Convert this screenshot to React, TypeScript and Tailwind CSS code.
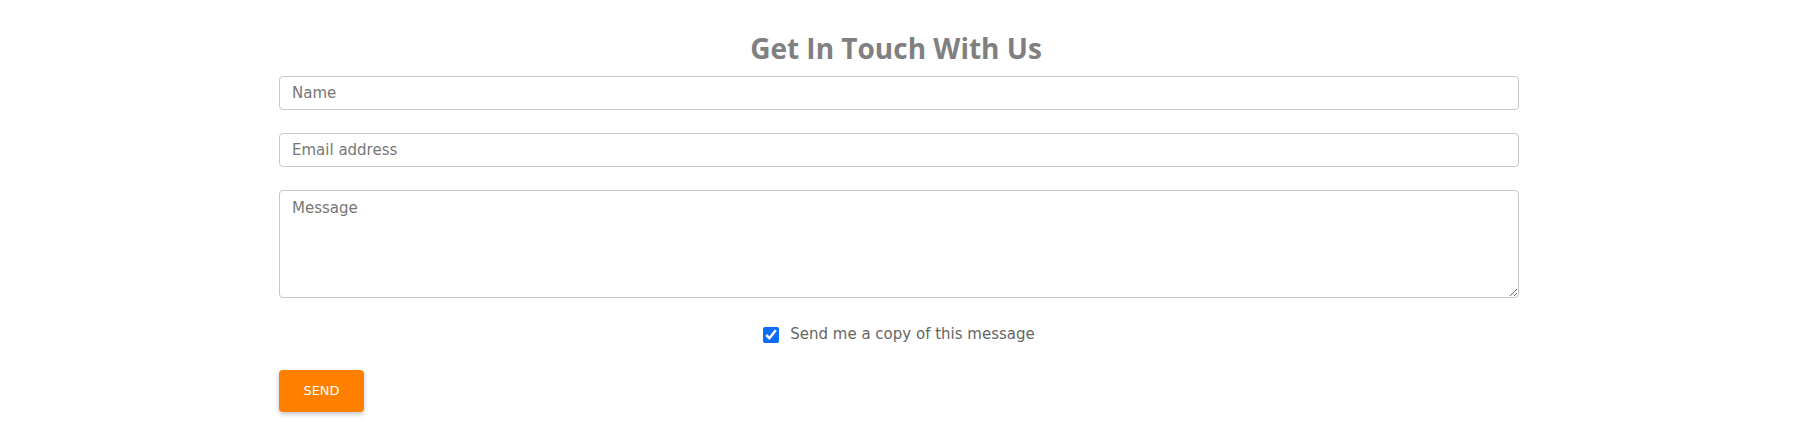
import { useState } from 'react'

export default function App() {
  const [copy, setCopy] = useState(true)

  return (
    <div className="min-h-[436px] bg-white flex justify-center pr-[11px] font-['DejaVu_Sans',sans-serif]">
      <form className="w-[1240px] flex flex-col" onSubmit={(e) => e.preventDefault()}>
        <h2 className="text-center text-[28px] leading-none font-bold text-[#808080] font-['Open_Sans',sans-serif] pt-[34px] pb-[14px] pr-[6px]">
          Get In Touch With Us
        </h2>

        <input
          type="text"
          placeholder="Name"
          className="h-[34px] px-3 rounded border border-[#c8c8c8] text-[15px] text-[#555] placeholder:text-[#777] outline-none"
        />
        <input
          type="email"
          placeholder="Email address"
          className="mt-[23px] h-[34px] px-3 rounded border border-[#c8c8c8] text-[15px] text-[#555] placeholder:text-[#777] outline-none"
        />
        <textarea
          placeholder="Message"
          className="mt-[23px] h-[108px] px-3 py-[6px] rounded border border-[#c8c8c8] text-[15px] text-[#555] placeholder:text-[#777] outline-none"
        />

        <label className="mt-[28px] h-[17px] leading-[17px] flex items-center justify-center gap-[11px] text-[15px] text-[#666]">
          <input
            type="checkbox"
            checked={copy}
            onChange={(e) => setCopy(e.target.checked)}
            className="w-[16px] h-[16px] accent-[#0b6cf5]"
          />
          Send me a copy of this message
        </label>

        <div className="mt-[27px]">
          <button
            type="submit"
            className="w-[85px] h-[42px] rounded bg-[#ff7f00] text-white text-[13px] shadow-[0_2px_5px_rgba(0,0,0,0.25)]"
          >
            SEND
          </button>
        </div>
      </form>
    </div>
  )
}
